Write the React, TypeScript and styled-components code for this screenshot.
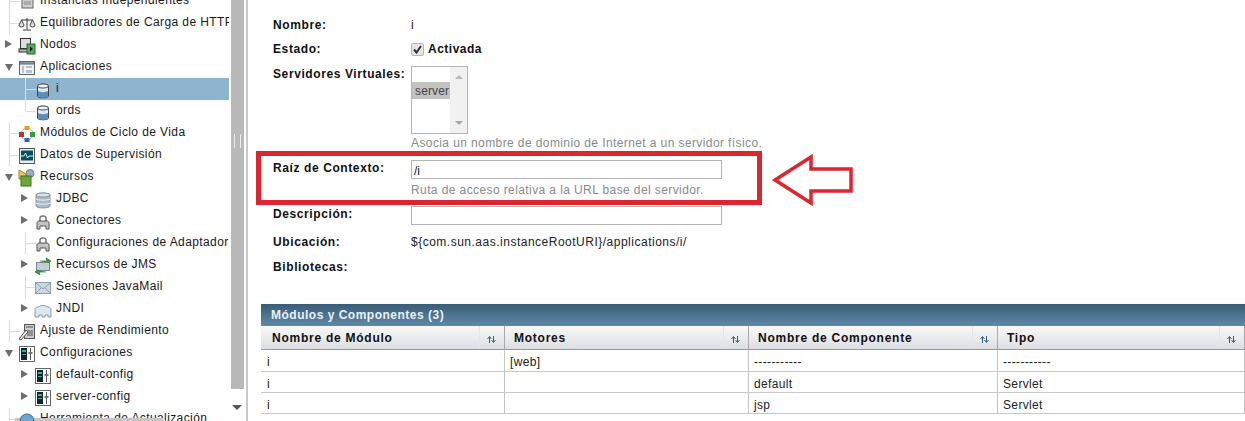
import React from "react";
import styled, { createGlobalStyle } from "styled-components";

const Global = createGlobalStyle`
  html, body { margin: 0; padding: 0; background: #fff; }
  body { font-family: "Liberation Sans", Arial, sans-serif; color: #111; }
`;

const Page = styled.div`
  display: flex;
  width: 1245px;
  height: 421px;
  overflow: hidden;
  position: relative;
  background: #fff;
`;
const Sidebar = styled.aside`
  flex: 0 0 246px;
  display: flex;
  height: 421px;
  border-right: 2px solid #c9c9c9;
  box-sizing: content-box;
`;
const TreeViewport = styled.div`
  width: 229px;
  height: 421px;
  overflow: hidden;
  flex: none;
`;
const Tree = styled.div`
  margin-top: -10px;
  position: relative;
`;
const Row = styled.div<{ $sel?: boolean; $depth: number }>`
  height: 22px;
  width: 229px;
  display: flex;
  align-items: center;
  padding-left: ${(p) => (p.$depth ? 34 : 18)}px;
  box-sizing: border-box;
  position: relative;
  background: ${(p) => (p.$sel ? "#8fb4cf" : "transparent")};
  overflow: hidden;
`;
const Twisty = styled.span<{ $open?: boolean; $depth: number }>`
  position: absolute;
  left: ${(p) => (p.$depth ? 21 : 5)}px;
  top: ${(p) => (p.$open ? 8 : 6)}px;
  width: 0;
  height: 0;
  ${(p) =>
    p.$open
      ? "border-left: 4px solid transparent; border-right: 4px solid transparent; border-top: 7px solid #6e6e6e;"
      : "border-top: 4px solid transparent; border-bottom: 4px solid transparent; border-left: 7px solid #6e6e6e;"}
`;
const Branch = styled.span<{ $depth: number; $last?: boolean }>`
  position: absolute;
  left: ${(p) => (p.$depth ? 25 : 9)}px;
  top: 0;
  width: 10px;
  height: ${(p) => (p.$last ? 11 : 22)}px;
  border-left: 1px solid #dcdcdc;
  &::after {
    content: "";
    position: absolute;
    left: 0;
    top: 11px;
    width: 10px;
    border-top: 1px solid #dcdcdc;
  }
`;
const IconBox = styled.span`
  width: 18px;
  height: 18px;
  flex: none;
  display: block;
  position: relative;
  top: 1px;
  z-index: 1;
`;
const RowLabel = styled.span`
  font-size: 12px;
  letter-spacing: 0.4px;
  margin-left: 4px;
  white-space: nowrap;
  color: #1a1a1a;
  position: relative;
  top: -1px;
`;
const ScrollTrack = styled.div`
  width: 17px;
  flex: none;
  background: #fff;
  display: flex;
  flex-direction: column;
  padding-left: 2px;
  box-sizing: border-box;
`;
const Thumb = styled.div`
  width: 13px;
  height: 389px;
  background: #b9b9b9;
  position: relative;
  &::after {
    content: "";
    position: absolute;
    left: 3px;
    top: 134px;
    width: 5px;
    height: 14px;
    border-left: 1px solid #ececec;
    border-right: 1px solid #ececec;
  }
`;
const ScrollArrow = styled.div`
  margin: 16px 0 0 1px;
  width: 0;
  height: 0;
  border-left: 5px solid transparent;
  border-right: 5px solid transparent;
  border-top: 5px solid #555;
`;
const HScroll = styled.div`
  position: absolute;
  left: 15px;
  bottom: 0;
  width: 148px;
  height: 3px;
  background: #c6c6c6;
`;

const Main = styled.main`
  flex: 1;
  min-width: 0;
  padding-top: 16px;
  position: relative;
`;
const Form = styled.div`
  padding-left: 25px;
  height: 288px;
`;
const Field = styled.div<{ $h: number }>`
  display: grid;
  grid-template-columns: 138px 1fr;
  height: ${(p) => p.$h}px;
`;
const Label = styled.div`
  font-size: 12px;
  font-weight: 700;
  line-height: 16px;
  letter-spacing: 0.6px;
  padding-top: 1px;
  color: #111;
  white-space: nowrap;
`;
const Value = styled.div`
  font-size: 12px;
  line-height: 16px;
  letter-spacing: 0.5px;
  padding-top: 1px;
  color: #222;
`;
const CheckLine = styled.div`
  display: flex;
  align-items: center;
  gap: 4px;
  font-size: 12px;
  font-weight: 700;
  line-height: 16px;
  letter-spacing: 0.5px;
  margin-top: 1px;
  height: 16px;
`;
const Check = styled.span`
  width: 11px;
  height: 11px;
  border: 1px solid #b5b5b5;
  border-radius: 2px;
  background: #e6e6e6;
  display: flex;
  align-items: center;
  justify-content: center;
`;
const ListBox = styled.div`
  width: 55px;
  height: 66px;
  border: 1px solid #b4b4b4;
  margin-top: 1px;
  display: flex;
  background: #fff;
`;
const ListItems = styled.div`
  width: 38px;
  padding-top: 15px;
`;
const ListItem = styled.div`
  height: 17px;
  background: #c2c2c2;
  font-size: 12px;
  line-height: 18px;
  letter-spacing: 0.15px;
  color: #444;
  padding-left: 3px;
`;
const ListScroll = styled.div`
  width: 17px;
  background: #f1f1f1;
  display: flex;
  flex-direction: column;
  justify-content: space-between;
  align-items: center;
  padding: 8px 0 8px;
`;
const Tri = styled.span<{ $up?: boolean }>`
  width: 0;
  height: 0;
  border-left: 4px solid transparent;
  border-right: 4px solid transparent;
  ${(p) => (p.$up ? "border-bottom: 4px solid #b8b8b8;" : "border-top: 4px solid #a8a8a8;")}
`;
const Help = styled.div`
  font-size: 12px;
  line-height: 16px;
  letter-spacing: 0.4px;
  padding-top: 1px;
  color: #8a8a8a;
  white-space: nowrap;
`;
const TextBox = styled.div`
  height: 17px;
  border: 1px solid #b4b4b4;
  margin: 1px 0 2px;
  font-size: 12px;
  line-height: 20px;
  padding-left: 2px;
  box-sizing: content-box;
  width: 307px;
  color: #222;
`;
const Callout = styled.div`
  position: absolute;
  left: 8px;
  top: 151px;
  width: 506px;
  height: 54px;
  box-sizing: border-box;
  border: 5px solid #dd2530;
  pointer-events: none;
`;
const ArrowSvg = styled.svg`
  position: absolute;
  left: 522px;
  top: 150px;
  width: 88px;
  height: 62px;
`;

const TableWrap = styled.section`
  margin-left: 13px;
`;
const TitleBar = styled.div`
  height: 22px;
  background: linear-gradient(#3a5c76, #5f89a8);
  color: #eaf0f4;
  font-size: 12px;
  font-weight: 700;
  line-height: 23px;
  letter-spacing: 0.5px;
  padding-left: 10px;
`;
const Grid = styled.div`
  display: grid;
  grid-template-columns: 244px 244px 249px 247px;
`;
const Head = styled.div`
  height: 24px;
  box-sizing: border-box;
  border-right: 1px solid #a9a9a9;
  border-bottom: 1px solid #9a9a9a;
  background: linear-gradient(#f8f8f8, #dcdfe2);
  font-size: 12px;
  font-weight: 700;
  letter-spacing: 0.75px;
  line-height: 25px;
  padding-left: 9px;
  position: relative;
  color: #111;
  white-space: nowrap;
  &:first-child { padding-left: 11px; }
`;
const SortCell = styled.span`
  position: absolute;
  right: 2px;
  top: 0;
  bottom: 1px;
  width: 22px;
  border-left: 1px solid #e6e6e6;
  display: flex;
  align-items: center;
  justify-content: center;
  svg { margin-top: 5px; }
`;
const Cell = styled.div<{ $h: number; $first?: boolean }>`
  height: ${(p) => p.$h}px;
  box-sizing: border-box;
  border-right: 1px solid #c4c4c4;
  border-bottom: 1px solid #c8c8c8;
  font-size: 12px;
  line-height: 24px;
  padding-left: ${(p) => (p.$first ? 6 : 5)}px;
  letter-spacing: 0.35px;
  color: #222;
  white-space: nowrap;
  overflow: hidden;
`;

const Svg = ({ children }: { children: React.ReactNode }) => (
  <svg width="18" height="18" viewBox="0 0 18 18">{children}</svg>
);

const Db = () => (
  <Svg>
    <path d="M3.500 5c0-2.400 11-2.400 11 0v10c0 2.400-11 2.400-11 0z" fill="#dfe6ea" stroke="#444" />
    <ellipse cx="9" cy="5" rx="5.500" ry="2" fill="#eef2f4" stroke="#555" />
    <path d="M4 10c2 1.500 8 1.500 10 0v5c-2 2-8 2-10 0z" fill="#5a8fbd" />
  </Svg>
);
const Cyl = () => (
  <Svg>
    <path d="M2 4c0-2.600 14-2.600 14 0v11c0 2.600-14 2.600-14 0z" fill="#a8b9c6" stroke="#8a96a0" />
    <path d="M2 8c2 1.500 12 1.500 14 0M2 12c2 1.500 12 1.500 14 0" stroke="#eef2f5" fill="none" />
    <ellipse cx="9" cy="4" rx="7" ry="2" fill="#dbe3e9" stroke="#8a96a0" />
  </Svg>
);
const Plug = () => (
  <Svg>
    <path d="M6 8V5c0-1 1-2 3-2s3 1 3 2v3" fill="none" stroke="#777" strokeWidth="1.500" />
    <path d="M3 16v-6c0-1 1-2 2-2h8c1 0 2 1 2 2v6h-3v-3H6v3z" fill="#c4c4c4" stroke="#555" />
  </Svg>
);
const Config = () => (
  <Svg>
    <rect x="1.500" y="1.500" width="15" height="15" fill="#fff" stroke="#666" />
    <rect x="3" y="3" width="6" height="12" fill="#123" />
    <rect x="4" y="5" width="4" height="2" fill="#3db08a" />
    <rect x="4" y="9" width="4" height="1" fill="#3db08a" />
    <path d="M12.500 3v12" stroke="#555" />
    <rect x="10.500" y="7" width="4" height="2" fill="#777" />
  </Svg>
);
const Icons: Record<string, React.ReactNode> = {
  server: (
    <Svg>
      <rect x="4" y="0" width="11" height="15" fill="#cfcfcf" stroke="#666" />
      <path d="M6 9h7M6 11h7" stroke="#888" />
    </Svg>
  ),
  scale: (
    <Svg>
      <path d="M9 3v11M3 5h12M5 15h8" stroke="#333" fill="none" />
      <path d="M1 10l2.500-5L6 10a2.500 2 0 0 1-5 0zM12 10l2.500-5 2.500 5a2.500 2 0 0 1-5 0z" fill="#ddd" stroke="#444" />
    </Svg>
  ),
  node: (
    <Svg>
      <rect x="2.500" y="1.500" width="10" height="10" fill="#ddd" stroke="#333" />
      <rect x="1" y="12" width="13" height="3" fill="#bbb" stroke="#333" />
      <rect x="9" y="7" width="8" height="10" fill="#58a85a" stroke="#2c6a30" />
      <path d="M12 9.500l3 2.500-3 2.500z" fill="#113" />
    </Svg>
  ),
  app: (
    <Svg>
      <rect x="1.500" y="2.500" width="15" height="13" fill="#eef2f6" stroke="#666" />
      <rect x="1.500" y="2.500" width="15" height="2.500" fill="#8e99a3" stroke="#666" />
      <path d="M4 7h2v7H4zM8 7h6v2H8zM8 11h6v3H8z" fill="#b7c5d1" />
    </Svg>
  ),
  db: <Db />,
  life: (
    <Svg>
      <circle cx="9" cy="9" r="6" fill="none" stroke="#aaa" />
      <rect x="6.500" y="1" width="5" height="4" fill="#e0a020" />
      <rect x="1" y="7" width="5" height="5" fill="#c43030" />
      <rect x="12" y="7" width="5" height="5" fill="#3a9a40" />
      <rect x="6.500" y="13" width="5" height="4" fill="#3a60b0" />
    </Svg>
  ),
  monitor: (
    <Svg>
      <rect x="1.500" y="1.500" width="15" height="15" fill="#eee" stroke="#555" />
      <rect x="3" y="3.500" width="12" height="10" fill="#0b4f5f" />
      <path d="M3 9h3l1.500-3 2 5 1.500-2h4" stroke="#bff" fill="none" />
    </Svg>
  ),
  res: (
    <Svg>
      <path d="M1 1l7 4v5H1z" fill="#e8c860" stroke="#a88a20" />
      <circle cx="12" cy="4.500" r="4" fill="#9ab0c0" stroke="#6d808e" />
      <rect x="3" y="7" width="10" height="10" fill="#6aa83a" stroke="#3e7020" />
    </Svg>
  ),
  cyl: <Cyl />,
  plug: <Plug />,
  jms: (
    <Svg>
      <rect x="2.500" y="5.500" width="13" height="8" fill="#c2cfd8" stroke="#7b8a95" />
      <path d="M6 4h7l-1-3 5 3-3 2M12 15H5l1 3-5-3 3-2" fill="#3f9a3f" stroke="#2a7a2a" strokeWidth=".7" />
    </Svg>
  ),
  mail: (
    <Svg>
      <rect x="1.500" y="3.500" width="15" height="11" fill="#c9d9e6" stroke="#8ba0b0" />
      <path d="M2 4l7 6 7-6M2 14l5-5M16 14l-5-5" stroke="#8ba0b0" fill="none" />
    </Svg>
  ),
  jndi: (
    <Svg>
      <path d="M1 16v-7c0-2 1-3 3-3h1c0-2 8-2 8 0h1c2 0 3 1 3 3v7h-3v-2h-3v2H8v-2H5v2z" fill="#dfe7ee" stroke="#8d99a3" />
    </Svg>
  ),
  tune: (
    <Svg>
      <rect x="6.500" y="1.500" width="10" height="14" fill="#ccc" stroke="#555" />
      <path d="M8 4h7M9 8h6M9 10h6M9 12h6" stroke="#555" />
      <path d="M1 16l7-9 2 2-7 8z" fill="#eee" stroke="#555" />
    </Svg>
  ),
  config: <Config />,
  update: (
    <Svg>
      <circle cx="9" cy="10" r="7" fill="#6da5cf" stroke="#35688f" />
    </Svg>
  ),
};

type Node = { t: string; i: string; d: number; tw?: "o" | "c"; sel?: boolean; last?: boolean };
const nodes: Node[] = [
  { t: "Instancias Independientes", i: "server", d: 0 },
  { t: "Equilibradores de Carga de HTTP", i: "scale", d: 0 },
  { t: "Nodos", i: "node", d: 0, tw: "c" },
  { t: "Aplicaciones", i: "app", d: 0, tw: "o" },
  { t: "i", i: "db", d: 1, sel: true },
  { t: "ords", i: "db", d: 1, last: true },
  { t: "Módulos de Ciclo de Vida", i: "life", d: 0 },
  { t: "Datos de Supervisión", i: "monitor", d: 0 },
  { t: "Recursos", i: "res", d: 0, tw: "o" },
  { t: "JDBC", i: "cyl", d: 1, tw: "c" },
  { t: "Conectores", i: "plug", d: 1, tw: "c" },
  { t: "Configuraciones de Adaptador", i: "plug", d: 1 },
  { t: "Recursos de JMS", i: "jms", d: 1, tw: "c" },
  { t: "Sesiones JavaMail", i: "mail", d: 1 },
  { t: "JNDI", i: "jndi", d: 1, tw: "c" },
  { t: "Ajuste de Rendimiento", i: "tune", d: 0 },
  { t: "Configuraciones", i: "config", d: 0, tw: "o" },
  { t: "default-config", i: "config", d: 1, tw: "c" },
  { t: "server-config", i: "config", d: 1, tw: "c" },
  { t: "Herramienta de Actualización", i: "update", d: 0 },
];

const Sort = () => (
  <SortCell>
    <svg width="9" height="7" viewBox="0 0 9 7">
      <path d="M2.500 7V1M.5 3l2-2.500 2 2.500" fill="none" stroke="#2f5f8f" />
      <path d="M6.500 0v6M4.500 4l2 2.500 2-2.500" fill="none" stroke="#2f5f8f" />
    </svg>
  </SortCell>
);

const heads = ["Nombre de Módulo", "Motores", "Nombre de Componente", "Tipo"];
const rows = [
  { h: 22, c: ["i", "[web]", "-----------", "-----------"] },
  { h: 21, c: ["i", "", "default", "Servlet"] },
  { h: 21, c: ["i", "", "jsp", "Servlet"] },
];

export default function App() {
  return (
    <Page>
      <Global />
      <Sidebar>
        <TreeViewport>
          <Tree>
            {nodes.map((n) => (
              <Row key={n.t} $sel={n.sel} $depth={n.d}>
                {n.tw ? <Twisty $open={n.tw === "o"} $depth={n.d} /> : <Branch $depth={n.d} $last={n.last} />}
                <IconBox>{Icons[n.i]}</IconBox>
                <RowLabel>{n.t}</RowLabel>
              </Row>
            ))}
          </Tree>
        </TreeViewport>
        <ScrollTrack>
          <Thumb />
          <ScrollArrow />
        </ScrollTrack>
      </Sidebar>
      <HScroll />
      <Main>
        <Form>
          <Field $h={24}>
            <Label>Nombre:</Label>
            <Value>i</Value>
          </Field>
          <Field $h={25}>
            <Label>Estado:</Label>
            <CheckLine>
              <Check>
                <svg width="9" height="9" viewBox="0 0 9 9">
                  <path d="M1 4.500l2.500 3L8 1" fill="none" stroke="#333" strokeWidth="2" />
                </svg>
              </Check>
              Activada
            </CheckLine>
          </Field>
          <Field $h={94}>
            <Label>Servidores Virtuales:</Label>
            <div>
              <ListBox>
                <ListItems>
                  <ListItem>server</ListItem>
                </ListItems>
                <ListScroll>
                  <Tri $up />
                  <Tri />
                </ListScroll>
              </ListBox>
              <Help>Asocia un nombre de dominio de Internet a un servidor físico.</Help>
            </div>
          </Field>
          <Field $h={46}>
            <Label>Raíz de Contexto:</Label>
            <div>
              <TextBox>/i</TextBox>
              <Help>Ruta de acceso relativa a la URL base del servidor.</Help>
            </div>
          </Field>
          <Field $h={28}>
            <Label>Descripción:</Label>
            <TextBox />
          </Field>
          <Field $h={25}>
            <Label>Ubicación:</Label>
            <Value>{"${com.sun.aas.instanceRootURI}/applications/i/"}</Value>
          </Field>
          <Field $h={46}>
            <Label>Bibliotecas:</Label>
            <span />
          </Field>
        </Form>
        <TableWrap>
          <TitleBar>Módulos y Componentes (3)</TitleBar>
          <Grid>
            {heads.map((h) => (
              <Head key={h}>
                {h}
                <Sort />
              </Head>
            ))}
            {rows.map((r, i) => (
              <React.Fragment key={i}>
                {r.c.map((c, j) => (
                  <Cell key={j} $h={r.h} $first={j === 0}>{c}</Cell>
                ))}
              </React.Fragment>
            ))}
          </Grid>
        </TableWrap>
        <Callout />
        <ArrowSvg viewBox="0 0 88 62">
          <path d="M5 30L41 7V19H81V41H41V53Z" fill="#fff" stroke="#dd2530" strokeWidth="3.500" />
        </ArrowSvg>
      </Main>
    </Page>
  );
}
